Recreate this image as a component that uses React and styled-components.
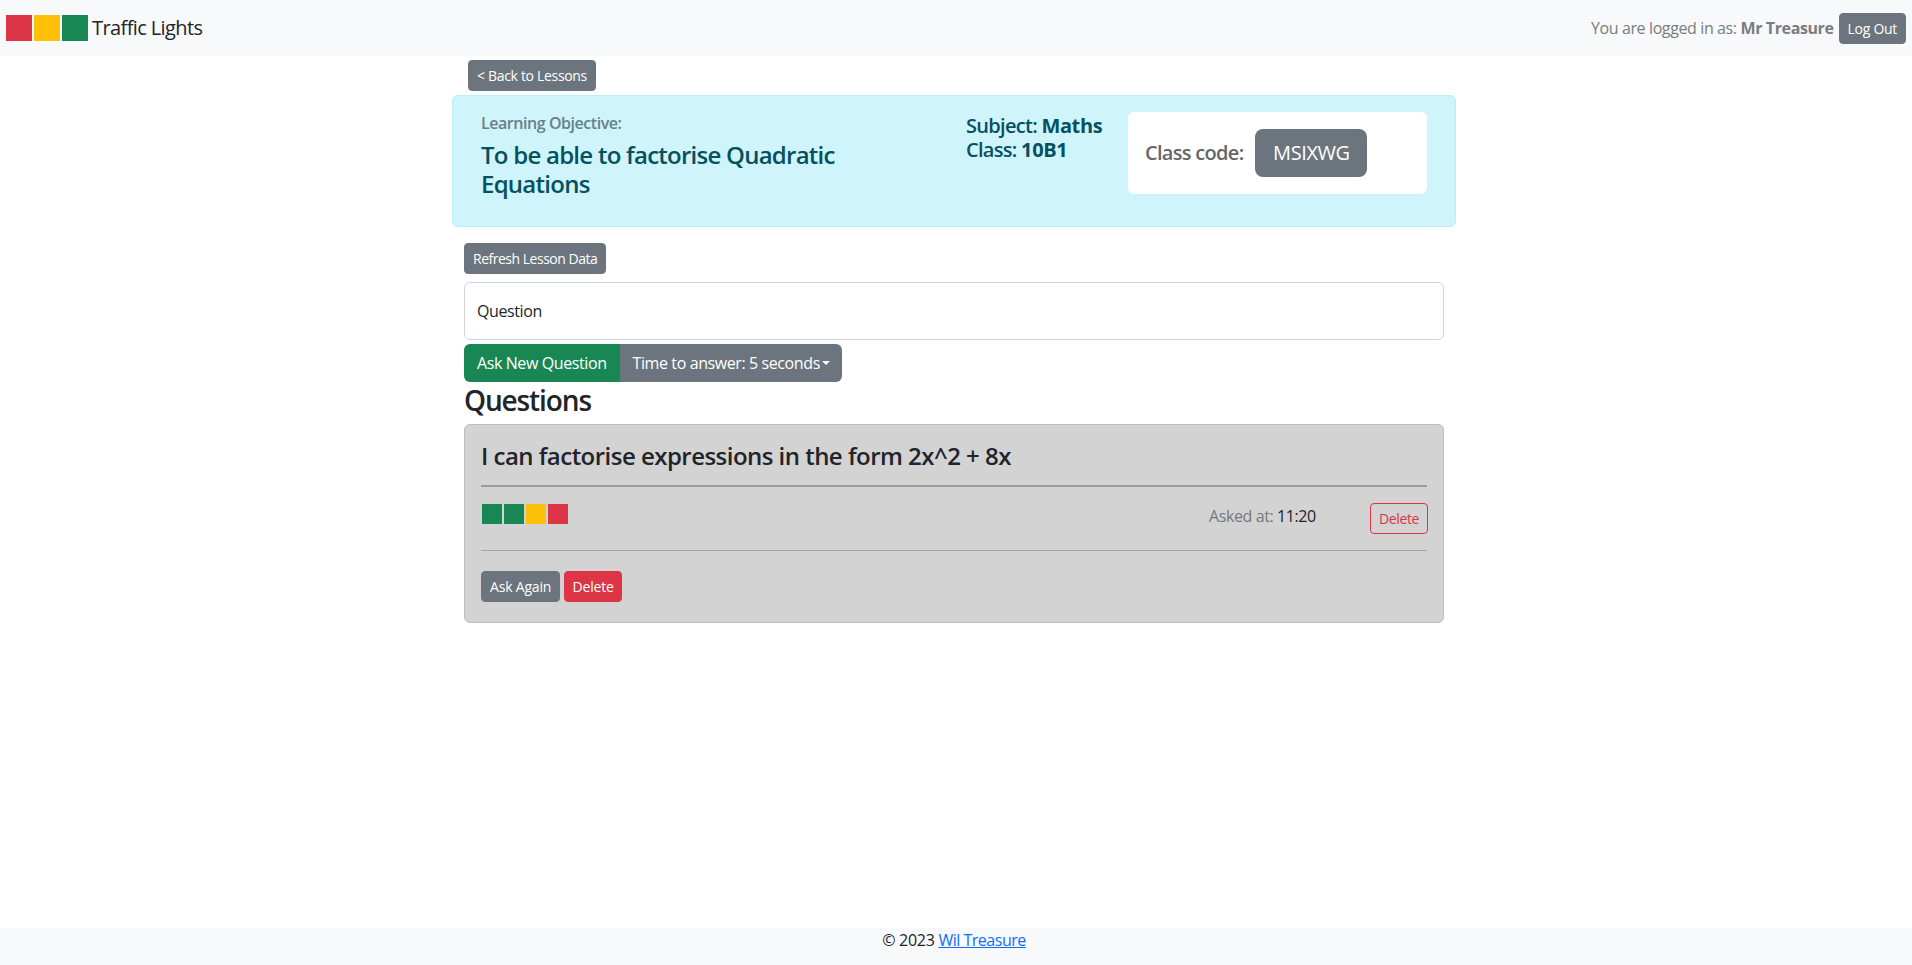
import React from 'react';
import styled, { createGlobalStyle } from 'styled-components';

const GlobalStyle = createGlobalStyle`
  html, body {
    margin: 0;
    padding: 0;
    background: #fff;
  }
  body {
    font-family: "Open Sans", "Noto Sans", sans-serif;
    font-size: 16px;
    line-height: 24px;
    color: #212529;
    letter-spacing: -0.025em;
  }
  * {
    box-sizing: border-box;
  }
`;

const Page = styled.div`
  display: flex;
  flex-direction: column;
  min-height: 100vh;
`;

const Navbar = styled.nav`
  height: 56px;
  background: #f8f9fa;
  display: flex;
  align-items: center;
  justify-content: space-between;
  padding: 0 6px;
`;

const Brand = styled.div`
  display: flex;
  align-items: center;
  font-size: 20px;
  letter-spacing: -0.03em;
`;

const BrandLight = styled.div`
  width: 26px;
  height: 26px;
  margin-right: 2px;
  background: ${(p) => p.$color};
`;

const BrandName = styled.span`
  margin-left: 2px;
`;

const UserArea = styled.div`
  display: flex;
  align-items: center;
  gap: 5px;
  color: #7a7d80;
  letter-spacing: -0.018em;
`;

const UserText = styled.span`
  letter-spacing: -0.024em;
`;

const Main = styled.main`
  flex: 1;
  width: 1004px;
  margin-left: 452px;
`;

const Button = styled.button`
  display: block;
  border: 1px solid ${(p) => p.$color || '#6c757d'};
  background: ${(p) => (p.$outline ? 'transparent' : p.$color || '#6c757d')};
  color: ${(p) => (p.$outline ? p.$color : '#fff')};
  font-family: inherit;
  letter-spacing: inherit;
  font-size: 14px;
  line-height: 21px;
  padding: 4px 8px;
  border-radius: 4px;
  white-space: nowrap;
`;

const BackRow = styled.div`
  height: 39px;
  padding: 4px 0 0 16px;
  letter-spacing: -0.02em;
`;

const Alert = styled.section`
  display: grid;
  grid-template-columns: 485px 162px 299px;
  align-items: start;
  height: 132px;
  padding: 16px 28px 32px;
  background: #cff4fc;
  border: 1px solid #b6effb;
  border-radius: 6px;
  color: #055160;
`;

const ObjectiveLabel = styled.div`
  margin-top: -1px;
  font-size: 16px;
  font-weight: 550;
  letter-spacing: -0.028em;
  color: #66818a;
`;

const ObjectiveText = styled.h4`
  margin: 5px 0 0;
  width: 400px;
  font-size: 24px;
  line-height: 29px;
  font-weight: 550;
  letter-spacing: -0.031em;
`;

const LessonMeta = styled.div`
  margin-top: 2px;
  font-size: 20px;
  line-height: 24px;
  font-weight: 550;
  letter-spacing: -0.035em;
`;

const MetaValue = styled.b`
  font-weight: 700;
  letter-spacing: -0.02em;
`;

const CodeBox = styled.div`
  display: flex;
  align-items: flex-start;
  gap: 12px;
  height: 82px;
  padding: 17px 17px;
  background: #fff;
  border-radius: 6px;
  color: #666;
  font-size: 20px;
  font-weight: 550;
  letter-spacing: -0.035em;
  line-height: 48px;
`;

const CodeBadge = styled.div`
  width: 112px;
  height: 48px;
  background: #6c757d;
  border-radius: 8px;
  color: #fff;
  font-weight: 400;
  letter-spacing: -0.02em;
  text-align: center;
`;

const Body = styled.div`
  padding: 16px 12px 0;
`;

const RefreshButton = styled(Button)`
  letter-spacing: -0.035em;
`;

const QuestionInput = styled.div`
  height: 58px;
  margin-top: 8px;
  padding: 0 12px;
  display: flex;
  align-items: center;
  background: #fff;
  border: 1px solid #ced4da;
  border-radius: 6px;
`;

const AskGroup = styled.div`
  display: flex;
  margin-top: 4px;
  width: 378px;
  height: 38px;
  border-radius: 6px;
  overflow: hidden;
  color: #fff;
  white-space: nowrap;
`;

const AskPart = styled.div`
  display: flex;
  align-items: center;
  padding: 0 13px;
  background: ${(p) => p.$color};
  flex: ${(p) => (p.$grow ? 1 : '0 0 155px')};
`;

const Caret = styled.span`
  display: inline-block;
  margin-left: 2px;
  border-top: 4px solid #fff;
  border-left: 4px solid transparent;
  border-right: 4px solid transparent;
`;

const Heading = styled.h3`
  margin: 1px 0 7px;
  height: 34px;
  font-size: 28px;
  line-height: 34px;
  font-weight: 550;
  letter-spacing: -0.04em;
`;

const QuestionCard = styled.article`
  height: 199px;
  padding: 16px 16px 0;
  background: #d3d3d3;
  border: 1px solid #bdbdbd;
  border-radius: 6px;
`;

const QuestionTitle = styled.h4`
  margin: 0;
  height: 44px;
  font-size: 24px;
  line-height: 29px;
  font-weight: 550;
  letter-spacing: -0.022em;
`;

const ThickRule = styled.hr`
  margin: 0;
  border: 0;
  border-top: 2px solid #9c9c9c;
`;

const ThinRule = styled.hr`
  margin: 0;
  border: 0;
  border-top: 1px solid #a5a5a5;
`;

const ResponseRow = styled.div`
  display: flex;
  justify-content: space-between;
  height: 63px;
  padding-top: 17px;
`;

const Lights = styled.div`
  display: flex;
  gap: 2px;
  padding-left: 1px;
`;

const Light = styled.div`
  width: 20px;
  height: 20px;
  background: ${(p) => p.$color};
`;

const ResponseInfo = styled.div`
  display: flex;
  align-items: flex-start;
`;

const AskedAt = styled.div`
  width: 161px;
  color: #75797d;
`;

const AskedTime = styled.span`
  color: #212529;
`;

const DeleteResponse = styled(Button)`
  width: 58px;
  height: 31px;
  margin: -1px -1px 0 0;
  padding: 4px 0;
`;

const CardActions = styled.div`
  display: flex;
  gap: 4px;
  margin-top: 20px;
  letter-spacing: -0.012em;
`;

const CardDelete = styled(Button)`
  width: 58px;
  padding: 4px 0;
`;

const Footer = styled.footer`
  height: 37px;
  padding-right: 4px;
  background: #f8f9fa;
  text-align: center;
  letter-spacing: -0.018em;
`;

const FooterLink = styled.a`
  color: #0d6efd;
  text-decoration: underline;
  letter-spacing: -0.03em;
`;

const RED = '#dc3545';
const AMBER = '#ffc107';
const GREEN = '#198754';

const App = () => {
  return (
    <Page>
      <GlobalStyle />
      <Navbar>
        <Brand>
          <BrandLight $color={RED} />
          <BrandLight $color={AMBER} />
          <BrandLight $color={GREEN} />
          <BrandName>Traffic Lights</BrandName>
        </Brand>
        <UserArea>
          <UserText>
            You are logged in as: <b>Mr Treasure</b>
          </UserText>
          <Button>Log Out</Button>
        </UserArea>
      </Navbar>
      <Main>
        <BackRow>
          <Button>&lt; Back to Lessons</Button>
        </BackRow>
        <Alert>
          <div>
            <ObjectiveLabel>Learning Objective:</ObjectiveLabel>
            <ObjectiveText>To be able to factorise Quadratic Equations</ObjectiveText>
          </div>
          <LessonMeta>
            Subject: <MetaValue>Maths</MetaValue>
            <br />
            Class: <MetaValue>10B1</MetaValue>
          </LessonMeta>
          <CodeBox>
            Class code:
            <CodeBadge>MSIXWG</CodeBadge>
          </CodeBox>
        </Alert>
        <Body>
          <RefreshButton>Refresh Lesson Data</RefreshButton>
          <QuestionInput>Question</QuestionInput>
          <AskGroup>
            <AskPart $color={GREEN}>Ask New Question</AskPart>
            <AskPart $color="#6c757d" $grow>
              Time to answer: 5 seconds
              <Caret />
            </AskPart>
          </AskGroup>
          <Heading>Questions</Heading>
          <QuestionCard>
            <QuestionTitle>I can factorise expressions in the form 2x^2 + 8x</QuestionTitle>
            <ThickRule />
            <ResponseRow>
              <Lights>
                <Light $color={GREEN} />
                <Light $color={GREEN} />
                <Light $color={AMBER} />
                <Light $color={RED} />
              </Lights>
              <ResponseInfo>
                <AskedAt>
                  Asked at: <AskedTime>11:20</AskedTime>
                </AskedAt>
                <DeleteResponse $color={RED} $outline>
                  Delete
                </DeleteResponse>
              </ResponseInfo>
            </ResponseRow>
            <ThinRule />
            <CardActions>
              <Button>Ask Again</Button>
              <CardDelete $color={RED}>Delete</CardDelete>
            </CardActions>
          </QuestionCard>
        </Body>
      </Main>
      <Footer>
        © 2023 <FooterLink href="#">Wil Treasure</FooterLink>
      </Footer>
    </Page>
  );
};

export default App;
